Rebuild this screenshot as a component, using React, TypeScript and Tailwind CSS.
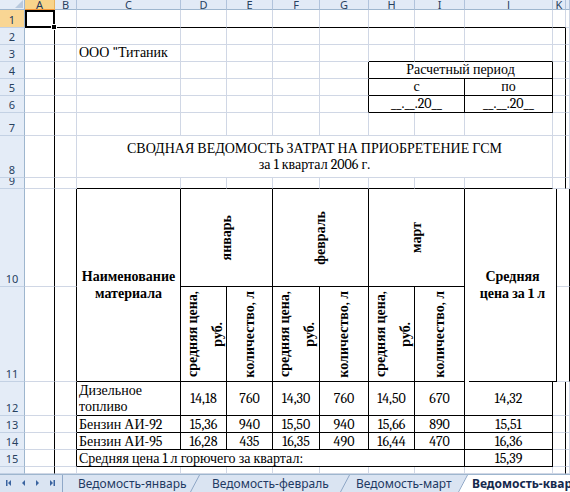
import React from 'react';

type Bd = 'g' | 'k' | 'n';

const wA = 'w-[30px]';
const wB = 'w-[22px]';
const wC = 'w-[104px]';
const wD = 'w-[46px]';
const wE = 'w-[46px]';
const wF = 'w-[47px]';
const wG = 'w-[49px]';
const wH = 'w-[46px]';
const wI = 'w-[50px]';
const wJ = 'w-[88px]';
const wK = 'w-[13px]';
const wL = 'flex-1 min-w-0';

function Cell({
  w,
  r = 'g',
  b = 'g',
  className = '',
  children,
}: {
  w: string;
  r?: Bd;
  b?: Bd;
  className?: string;
  children?: React.ReactNode;
}) {
  const rc = r === 'k' ? 'border-r-black' : r === 'n' ? 'border-r-transparent' : 'border-r-[#d0d7e5]';
  const bc = b === 'k' ? 'border-b-black' : b === 'n' ? 'border-b-transparent' : 'border-b-[#d0d7e5]';
  return (
    <div className={`${w} shrink-0 self-stretch overflow-hidden border-r border-b ${rc} ${bc} ${className}`}>
      {children}
    </div>
  );
}

function RH({ n, sel = false, h = '' }: { n: number | string; sel?: boolean; h?: string }) {
  return (
    <div
      className={`w-[25px] shrink-0 self-stretch ${h} flex items-end justify-center pb-[1px] overflow-hidden border-r border-b border-r-[#9eb6ce] border-b-[#c3d1e4] text-[11px] leading-[12px] font-sans ${
        sel ? 'bg-[#f9d694] text-[#1e395b]' : 'bg-[#e4ecf7] text-[#27415f]'
      }`}
    >
      {n}
    </div>
  );
}

function Row({ h, n, children }: { h: string; n: number | string; children: React.ReactNode }) {
  return (
    <div className={`flex ${h}`}>
      <RH n={n} />
      <Cell w={wA} r="k" />
      {children}
      <Cell w={wK} r="k" />
      <Cell w={wL} />
    </div>
  );
}

function Plain({ bot = 'g' as Bd }: { bot?: Bd }) {
  return (
    <>
      <Cell w={wB} />
      <Cell w={wC} b={bot} />
      <Cell w={wD} b={bot} />
      <Cell w={wE} b={bot} />
      <Cell w={wF} b={bot} />
      <Cell w={wG} b={bot} />
      <Cell w={wH} b={bot} />
      <Cell w={wI} b={bot} />
      <Cell w={wJ} b={bot} />
    </>
  );
}

function HC({ w, label, sel = false }: { w: string; label: string; sel?: boolean }) {
  return (
    <div
      className={`${w} shrink-0 self-stretch overflow-hidden flex items-end justify-center border-r border-b text-[11px] leading-[9px] font-sans ${
        sel
          ? 'bg-[#f8d48b] border-r-[#e9b35c] border-b-[#f29436] text-[#1e395b]'
          : 'bg-[#e2eaf6] border-r-[#b1c3dc] border-b-[#9eb6ce] text-[#27415f]'
      }`}
    >
      {label}
    </div>
  );
}

function V({ children }: { children: React.ReactNode }) {
  return (
    <span className="[writing-mode:vertical-rl] rotate-180 font-bold leading-[14px] whitespace-nowrap">
      {children}
    </span>
  );
}

function PriceHead({ w }: { w: string }) {
  return (
    <Cell w={w} r="k" b="k" className="flex items-center justify-center gap-[11px] pl-[3px]">
      <V>средняя цена,</V>
      <V>руб.</V>
    </Cell>
  );
}

function DataRow({
  n,
  name,
  vals,
  avg,
}: {
  n: number;
  name: string;
  vals: string[];
  avg: string;
}) {
  const num = 'flex items-end justify-center leading-[14px]';
  return (
    <Row h="h-[17px]" n={n}>
      <Cell w={wB} r="k" />
      <Cell w={wC} r="k" b="k" className="flex items-end px-[2px] leading-[14px] whitespace-nowrap">
        {name}
      </Cell>
      <Cell w={wD} r="k" b="k" className={num}>{vals[0]}</Cell>
      <Cell w={wE} r="k" b="k" className={num}>{vals[1]}</Cell>
      <Cell w={wF} r="k" b="k" className={num}>{vals[2]}</Cell>
      <Cell w={wG} r="k" b="k" className={num}>{vals[3]}</Cell>
      <Cell w={wH} r="k" b="k" className={num}>{vals[4]}</Cell>
      <Cell w={wI} r="k" b="k" className={num}>{vals[5]}</Cell>
      <Cell w={wJ} r="k" b="k" className={num}>{avg}</Cell>
    </Row>
  );
}

function Slant({ active = false }: { active?: boolean }) {
  return (
    <svg className="shrink-0" width="10" height="17" viewBox="0 0 10 17">
      {active && <polygon points="0,17 9,0 10,0 10,17" fill="#ffffff" />}
      <line x1="0.5" y1="17" x2="9.5" y2="0" stroke="#8ea6c6" strokeWidth="1" />
    </svg>
  );
}

export default function App() {
  const center = 'flex items-end justify-center leading-[16px]';
  return (
    <div className="w-[570px] h-[492px] overflow-hidden bg-white font-serif text-[14px] text-black">
      {/* column header */}
      <div className="flex h-[10px]">
        <div className="w-[25px] shrink-0 self-stretch border-r border-b border-r-[#9eb6ce] border-b-[#9eb6ce] bg-[#e4ecf7] flex items-end justify-end">
          <svg width="10" height="9" viewBox="0 0 10 9">
            <polygon points="9,0 9,8 1,8" fill="#b8c9de" />
          </svg>
        </div>
        <HC w={wA} label="A" sel />
        <HC w={wB} label="B" />
        <HC w={wC} label="C" />
        <HC w={wD} label="D" />
        <HC w={wE} label="E" />
        <HC w={wF} label="F" />
        <HC w={wG} label="G" />
        <HC w={wH} label="H" />
        <HC w={wI} label="I" />
        <HC w={wJ} label="J" />
        <HC w={wK} label="K" />
        <HC w={wL} label="" />
      </div>

      {/* row 1 */}
      <div className="flex h-[18px]">
        <RH n={1} sel />
        <div className="w-[30px] shrink-0 self-stretch relative border-2 border-black bg-white">
          <div className="absolute -right-[4px] -bottom-[4px] w-[6px] h-[6px] bg-black border border-white z-10" />
        </div>
        <Cell w={wB} b="k" />
        <Cell w={wC} b="k" />
        <Cell w={wD} b="k" />
        <Cell w={wE} b="k" />
        <Cell w={wF} b="k" />
        <Cell w={wG} b="k" />
        <Cell w={wH} b="k" />
        <Cell w={wI} b="k" />
        <Cell w={wJ} b="k" />
        <Cell w={wK} b="k" />
        <Cell w={wL} />
      </div>

      {/* row 2 */}
      <Row h="h-[17px]" n={2}>
        <Plain />
      </Row>

      {/* row 3 */}
      <Row h="h-[17px]" n={3}>
        <Cell w={wB} />
        <Cell w={wC} className="flex items-end px-[2px] leading-[16px] whitespace-nowrap">
          {'ООО "Титаник'}
        </Cell>
        <Cell w={wD} />
        <Cell w={wE} />
        <Cell w={wF} />
        <Cell w={wG} />
        <Cell w={wH} b="k" />
        <Cell w={wI} b="k" />
        <Cell w={wJ} b="k" />
      </Row>

      {/* row 4 */}
      <Row h="h-[17px]" n={4}>
        <Cell w={wB} />
        <Cell w={wC} />
        <Cell w={wD} />
        <Cell w={wE} />
        <Cell w={wF} />
        <Cell w={wG} r="k" />
        <Cell w="w-[184px]" r="k" b="k" className={center}>
          Расчетный период
        </Cell>
      </Row>

      {/* row 5 */}
      <Row h="h-[17px]" n={5}>
        <Cell w={wB} />
        <Cell w={wC} />
        <Cell w={wD} />
        <Cell w={wE} />
        <Cell w={wF} />
        <Cell w={wG} r="k" />
        <Cell w="w-[96px]" r="k" b="k" className={center}>
          с
        </Cell>
        <Cell w={wJ} r="k" b="k" className={center}>
          по
        </Cell>
      </Row>

      {/* row 6 */}
      <Row h="h-[17px]" n={6}>
        <Cell w={wB} />
        <Cell w={wC} />
        <Cell w={wD} />
        <Cell w={wE} />
        <Cell w={wF} />
        <Cell w={wG} r="k" />
        <Cell w="w-[96px]" r="k" b="k" className={center}>
          __.__.20__
        </Cell>
        <Cell w={wJ} r="k" b="k" className={center}>
          __.__.20__
        </Cell>
      </Row>

      {/* row 7 */}
      <Row h="h-[23px]" n={7}>
        <Plain />
      </Row>

      {/* row 8 */}
      <Row h="h-[42px]" n={8}>
        <Cell w={wB} />
        <Cell w="w-[476px]" className="flex flex-col items-center justify-center leading-[16px] whitespace-nowrap">
          <div>СВОДНАЯ ВЕДОМОСТЬ ЗАТРАТ НА ПРИОБРЕТЕНИЕ ГСМ</div>
          <div>за 1 квартал 2006 г.</div>
        </Cell>
      </Row>

      {/* row 9 */}
      <Row h="h-[11px]" n={9}>
        <Plain bot="k" />
      </Row>

      {/* rows 10-11 */}
      <div className="flex h-[193px]">
        <div className="flex flex-col w-[25px] shrink-0">
          <RH n={10} h="h-[98px]" />
          <RH n={11} h="h-[95px]" />
        </div>
        <div className="flex flex-col w-[30px] shrink-0">
          <Cell w={wA} r="k" className="h-[98px]" />
          <Cell w={wA} r="k" className="h-[95px]" />
        </div>
        <div className="flex flex-col w-[22px] shrink-0">
          <Cell w={wB} r="k" className="h-[98px]" />
          <Cell w={wB} r="k" className="h-[95px]" />
        </div>
        <Cell w={wC} r="k" b="k" className="flex items-center justify-center text-center font-bold leading-[17px]">
          <div>
            Наименование
            <br />
            материала
          </div>
        </Cell>
        <div className="flex flex-col w-[288px] shrink-0">
          <div className="flex h-[98px]">
            <Cell w="w-[92px]" r="k" b="k" className="flex items-center justify-center">
              <V>январь</V>
            </Cell>
            <Cell w="w-[96px]" r="k" b="k" className="flex items-center justify-center">
              <V>февраль</V>
            </Cell>
            <Cell w="w-[96px]" r="k" b="k" className="flex items-center justify-center">
              <V>март</V>
            </Cell>
          </div>
          <div className="flex h-[95px]">
            <PriceHead w={wD} />
            <Cell w={wE} r="k" b="k" className="flex items-center justify-center">
              <V>количество, л</V>
            </Cell>
            <PriceHead w={wF} />
            <Cell w={wG} r="k" b="k" className="flex items-center justify-center">
              <V>количество, л</V>
            </Cell>
            <PriceHead w={wH} />
            <Cell w={wI} r="k" b="k" className="flex items-center justify-center">
              <V>количество, л</V>
            </Cell>
          </div>
        </div>
        <Cell w={wJ} r="k" b="k" className="flex items-center justify-center text-center font-bold leading-[17px]">
          <div>
            Средняя
            <br />
            цена за 1 л
          </div>
        </Cell>
        <div className="flex flex-col w-[13px] shrink-0">
          <Cell w={wK} r="k" className="h-[98px]" />
          <Cell w={wK} r="k" className="h-[95px]" />
        </div>
        <div className="flex flex-col flex-1 min-w-0">
          <Cell w="w-full" className="h-[98px]" />
          <Cell w="w-full" className="h-[95px]" />
        </div>
      </div>

      {/* row 12 */}
      <Row h="h-[34px]" n={12}>
        <Cell w={wB} r="k" />
        <Cell w={wC} r="k" b="k" className="flex items-center px-[2px] leading-[16px]">
          <div>
            Дизельное
            <br />
            топливо
          </div>
        </Cell>
        <Cell w={wD} r="k" b="k" className="flex items-center justify-center">14,18</Cell>
        <Cell w={wE} r="k" b="k" className="flex items-center justify-center">760</Cell>
        <Cell w={wF} r="k" b="k" className="flex items-center justify-center">14,30</Cell>
        <Cell w={wG} r="k" b="k" className="flex items-center justify-center">760</Cell>
        <Cell w={wH} r="k" b="k" className="flex items-center justify-center">14,50</Cell>
        <Cell w={wI} r="k" b="k" className="flex items-center justify-center">670</Cell>
        <Cell w={wJ} r="k" b="k" className="flex items-center justify-center">14,32</Cell>
      </Row>

      <DataRow n={13} name="Бензин АИ-92" vals={['15,36', '940', '15,50', '940', '15,66', '890']} avg="15,51" />
      <DataRow n={14} name="Бензин АИ-95" vals={['16,28', '435', '16,35', '490', '16,44', '470']} avg="16,36" />

      {/* row 15 */}
      <Row h="h-[17px]" n={15}>
        <Cell w={wB} r="k" />
        <Cell w="w-[388px]" r="k" b="k" className="flex items-end px-[2px] leading-[14px] whitespace-nowrap">
          Средняя цена 1 л горючего за квартал:
        </Cell>
        <Cell w={wJ} r="k" b="k" className="flex items-end justify-center leading-[14px]">
          15,39
        </Cell>
      </Row>

      {/* row 16 (only a sliver visible) */}
      <Row h="h-[7px]" n="">
        <Plain />
      </Row>

      {/* sheet tabs */}
      <div className="flex h-[18px] bg-[#dae4f2] border-t border-t-[#9eb6ce] font-sans text-[12px] leading-[16px] text-[#1f3a63]">
        <svg className="shrink-0" width="62" height="17" viewBox="0 0 62 17">
          <rect x="6" y="5" width="1.5" height="6" fill="#3b64a0" />
          <polygon points="11,5 11,11 8,8" fill="#3b64a0" />
          <polygon points="25,5 25,11 22,8" fill="#3b64a0" />
          <polygon points="36,5 36,11 39,8" fill="#3b64a0" />
          <polygon points="50,5 50,11 53,8" fill="#3b64a0" />
          <rect x="53.5" y="5" width="1.5" height="6" fill="#3b64a0" />
        </svg>
        <div className="w-px shrink-0 bg-[#8fa8c8]" />
        <div className="w-[127px] shrink-0 flex items-center pl-[15px] whitespace-nowrap">Ведомость-январь</div>
        <Slant />
        <div className="w-[140px] shrink-0 flex items-center pl-[12px] whitespace-nowrap">Ведомость-февраль</div>
        <Slant />
        <div className="w-[108px] shrink-0 flex items-center pl-[6px] whitespace-nowrap">Ведомость-март</div>
        <Slant active />
        <div className="flex-1 min-w-0 bg-white flex items-center pl-[4px] font-bold text-[12px] text-[#15294d] whitespace-nowrap overflow-hidden">
          Ведомость-квартал
        </div>
      </div>
    </div>
  );
}
